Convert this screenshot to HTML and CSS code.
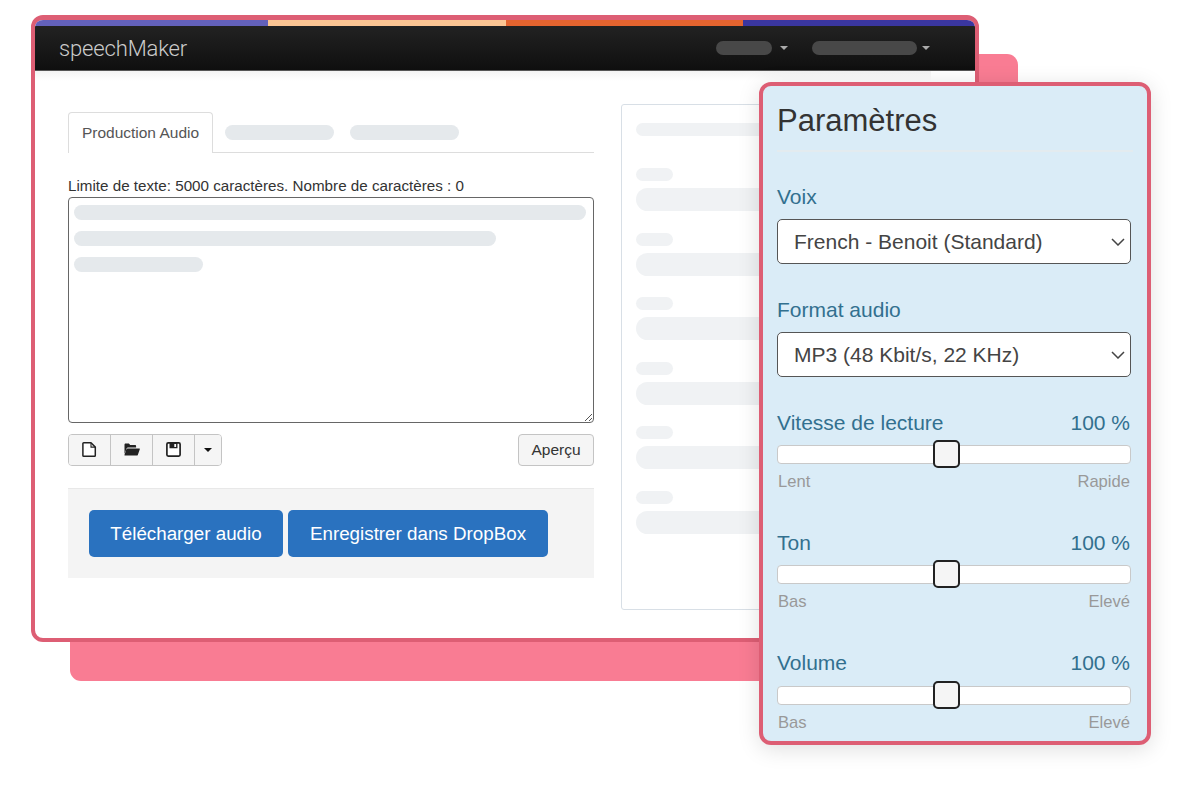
FILE: index.html
```html
<!DOCTYPE html>
<html lang="fr">
<head>
<meta charset="utf-8">
<title>speechMaker</title>
<link rel="stylesheet" href="styles.css">
</head>
<body>
<div class="stage">
  <div class="backdrop"></div>
  <section class="window">
    <div class="stripes">
      <span class="stripe s1"></span><span class="stripe s2"></span><span class="stripe s3"></span><span class="stripe s4"></span>
    </div>
    <nav class="navbar">
      <div class="logo">speechMaker</div>
      <div class="nav-items">
        <span class="nav-pill np1"></span><span class="nav-caret"></span>
        <span class="nav-pill np2"></span><span class="nav-caret nc2"></span>
      </div>
    </nav>
    <div class="nav-shadow"></div>
    <div class="content">
      <div class="left">
        <div class="tabs">
          <div class="tab">Production Audio</div>
          <span class="sk tab-sk"></span>
          <span class="sk tab-sk"></span>
        </div>
        <div class="limit">Limite de texte: 5000 caractères. Nombre de caractères : 0</div>
        <div class="textarea">
          <span class="sk ta1"></span>
          <span class="sk ta2"></span>
          <span class="sk ta3"></span>
          <svg class="grip" width="10" height="10" viewBox="0 0 10 10"><path d="M9 2 2 9M9 6 6 9" stroke="#555" stroke-width="1" fill="none"/></svg>
        </div>
        <div class="toolbar">
          <div class="btn-group">
            <button class="tb"><svg width="15" height="15" viewBox="0 0 15 15"><path d="M1.700 .8h7.300l4.300 4.300v8.300a.8.8 0 0 1-.8.8H1.700a.8.8 0 0 1-.8-.8V1.600a.8.8 0 0 1 .8-.8z" fill="#fff" stroke="#222" stroke-width="1.500" stroke-linejoin="round"/><path d="M9 1v4.100h4.100" fill="none" stroke="#222" stroke-width="1.100"/></svg></button>
            <button class="tb"><svg width="16" height="13" viewBox="0 0 16 13"><path d="M.5 11V1.700C.5 1 1 .5 1.700 .5h3.200l1.300 1.500h4.800c.7 0 1.100.4 1.100 1.100V4.400H3.900c-.6 0-1 .3-1.200.8z" fill="#222"/><path d="M3.500 5.400h11.700c.5 0 .8.4.6.9l-2 5.700c-.2.5-.6.6-1 .6H1c-.5 0-.7-.4-.5-.8l2-5.700c.2-.4.6-.7 1-.7z" fill="#222"/></svg></button>
            <button class="tb"><svg width="15" height="15" viewBox="0 0 15 15"><rect x=".9" y=".9" width="13.200" height="13.200" rx="1.300" fill="#fff" stroke="#222" stroke-width="1.700"/><path d="M3.500 1h8v5.200h-8z" fill="#222"/><rect x="8.300" y="2" width="1.800" height="3" fill="#fff"/></svg></button>
            <button class="tb tb-caret"><span class="caret-down"></span></button>
          </div>
          <button class="preview">Aperçu</button>
        </div>
        <div class="well">
          <button class="primary p1">Télécharger audio</button>
          <button class="primary p2">Enregistrer dans DropBox</button>
        </div>
      </div>
      <aside class="card">
        <span class="sk2 head"></span>
        <div class="card-row"><span class="sk2 small"></span><span class="sk2 big"></span></div>
        <div class="card-row"><span class="sk2 small"></span><span class="sk2 big"></span></div>
        <div class="card-row"><span class="sk2 small"></span><span class="sk2 big"></span></div>
        <div class="card-row"><span class="sk2 small"></span><span class="sk2 big"></span></div>
        <div class="card-row"><span class="sk2 small"></span><span class="sk2 big"></span></div>
        <div class="card-row"><span class="sk2 small"></span><span class="sk2 big"></span></div>
      </aside>
    </div>
  </section>

  <section class="panel">
    <h2 class="title">Paramètres</h2>
    <div class="rule"></div>
    <div class="field first">
      <div class="label">Voix</div>
      <div class="select">French - Benoit (Standard)<svg class="chev" width="14" height="8" viewBox="0 0 14 8"><path d="M1 1l6 6 6-6" fill="none" stroke="#444" stroke-width="1.500"/></svg></div>
    </div>
    <div class="field">
      <div class="label">Format audio</div>
      <div class="select">MP3 (48 Kbit/s, 22 KHz)<svg class="chev" width="14" height="8" viewBox="0 0 14 8"><path d="M1 1l6 6 6-6" fill="none" stroke="#444" stroke-width="1.500"/></svg></div>
    </div>
    <div class="range first-range">
      <div class="range-head"><span>Vitesse de lecture</span><span>100 %</span></div>
      <div class="track"><span class="thumb"></span></div>
      <div class="legend"><span>Lent</span><span>Rapide</span></div>
    </div>
    <div class="range">
      <div class="range-head"><span>Ton</span><span>100 %</span></div>
      <div class="track"><span class="thumb"></span></div>
      <div class="legend"><span>Bas</span><span>Elevé</span></div>
    </div>
    <div class="range last-range">
      <div class="range-head"><span>Volume</span><span>100 %</span></div>
      <div class="track"><span class="thumb"></span></div>
      <div class="legend"><span>Bas</span><span>Elevé</span></div>
    </div>
  </section>
</div>
</body>
</html>
```
FILE: styles.css
```css
* { box-sizing: border-box; }
html, body { margin: 0; padding: 0; background: #fff; }
body { font-family: "Liberation Sans", Arial, sans-serif; color: #333; }
.stage { position: relative; width: 1202px; height: 804px; overflow: hidden; }

.backdrop {
  position: absolute; left: 70px; top: 54px; width: 948px; height: 627px;
  background: #f97c93; border-radius: 11px;
}
.window {
  position: absolute; left: 31px; top: 15px; width: 948px; height: 627px;
  background: #fff; border: 4px solid #dd5e74; border-top-width: 5px; border-radius: 12px; overflow: hidden;
}
.stripes { display: flex; height: 6px; }
.stripe { display: block; height: 6px; }
.s1 { width: 233px; background: #6361bb; }
.s2 { width: 238px; background: #fbc593; }
.s3 { width: 237px; background: #e4642f; }
.s4 { width: 232px; background: #3a36a0; }

.navbar {
  display: flex; align-items: center; justify-content: space-between;
  height: 45px; padding: 0 45px 0 24px;
  background: linear-gradient(#222, #0f0f0f);
  border-bottom: 1px solid #555;
}
.logo { padding-top: 1px; font-family: Roboto, sans-serif; font-weight: 300; font-size: 22px; letter-spacing: -.15px; color: #ccc; }
.nav-items { display: flex; align-items: center; }
.nav-pill { display: block; height: 14px; border-radius: 7px; background: #484848; }
.np1 { width: 56px; }
.np2 { width: 105px; }
.nav-caret { width: 0; height: 0; margin: 0 24px 0 8px; border: 4.500px solid transparent; border-top: 4.500px solid #aaa; border-bottom: 0; }
.nav-caret.nc2 { margin: 0 0 0 5px; }
.nav-shadow { height: 10px; width: 896px; margin-bottom: -10px; background: linear-gradient(#f3f3f3, #fff); }

.content { display: flex; gap: 27px; padding: 33px 0 0 33px; }
.left { width: 526px; padding-top: 8px; }
.sk { display: block; background: #e5e9ec; border-radius: 8px; height: 15px; }

.tabs { display: flex; align-items: center; height: 41px; border-bottom: 1px solid #ddd; }
.tab {
  width: 145px; height: 41px; padding-top: 11px; text-align: center; font-size: 15.500px; color: #555;
  background: #fff; border: 1px solid #ddd; border-bottom: 0; border-radius: 4px 4px 0 0; margin-right: 12px;
}
.tab-sk { width: 109px; margin-right: 16px; }

.limit { height: 17px; margin-top: 24px; font-size: 15.200px; line-height: 17px; color: #333; white-space: nowrap; }
.textarea {
  position: relative; height: 226px; margin-top: 3px; padding: 7px 5px;
  border: 1px solid #666; border-radius: 4px; background: #fff;
  display: flex; flex-direction: column; gap: 11px;
}
.ta1 { width: 512px; }
.ta2 { width: 422px; }
.ta3 { width: 129px; }
.grip { position: absolute; right: 0; bottom: 0; }

.toolbar { display: flex; justify-content: space-between; margin-top: 11px; }
.btn-group { display: flex; height: 32px; border: 1px solid #c4c4c4; border-radius: 4px; overflow: hidden; }
.tb {
  display: flex; align-items: center; justify-content: center;
  width: 42px; height: 30px; padding: 0 0 2px; background: #f5f5f5; border: 0; border-right: 1px solid #c4c4c4;
}
.tb-caret { width: 26px; padding: 0; border-right: 0; }
.caret-down { width: 0; height: 0; border: 4.500px solid transparent; border-top: 4.500px solid #111; border-bottom: 0; }
.preview {
  width: 76px; height: 32px; padding: 0; font: 15.500px "Liberation Sans", Arial, sans-serif; color: #333;
  background: #f5f5f5; border: 1px solid #c4c4c4; border-radius: 4px;
}
.well {
  display: flex; gap: 5px; height: 90px; margin-top: 22px; padding: 21px 0 0 21px;
  background: #f4f4f4; border-top: 1px solid #e8e8e8;
}
.primary {
  height: 47px; padding: 0; font: 18.800px "Liberation Sans", Arial, sans-serif; color: #fff;
  background: #2a72bf; border: 0; border-radius: 5px;
}
.p1 { width: 194px; }
.p2 { width: 260px; }

.card {
  width: 310px; height: 506px; padding: 18px 14px 0; flex: none;
  background: #fff; border: 1px solid #d8dfe6; border-radius: 3px;
}
.sk2 { display: block; background: #f0f2f4; }
.head { width: 200px; height: 13px; border-radius: 7px; margin-bottom: 32px; }
.card-row { height: 64.600px; }
.small { width: 37px; height: 13px; border-radius: 7px; margin-bottom: 7px; }
.big { width: 260px; height: 23px; border-radius: 12px; }

.panel {
  position: absolute; left: 759px; top: 82px; width: 392px; height: 663px;
  padding: 0 16px 0 14px;
  background: #daecf7; border: 4px solid #dd5e74; border-radius: 12px;
  box-shadow: 0 4px 22px rgba(0,0,0,.13);
}
.title { margin: 0; height: 64px; font-weight: 400; font-size: 31px; line-height: 70px; color: #333; }
.rule { height: 2px; margin-right: -2px; background: #e3ebef; }
.field { margin-top: 34px; }
.field.first { margin-top: 33px; }
.label { height: 24px; font-size: 21px; line-height: 24px; color: #32708f; }
.select {
  display: flex; align-items: center; justify-content: space-between;
  height: 45px; margin-top: 10px; padding: 0 5px 0 16px;
  font-size: 21px; color: #444; background: #fff; border: 1px solid #555; border-radius: 5px;
}
.range { margin-top: 38px; }
.first-range { margin-top: 33px; }
.last-range { margin-top: 38px; }
.range-head { display: flex; justify-content: space-between; height: 24px; padding: 1px 1px 0 0; font-size: 21px; line-height: 24px; color: #32708f; }
.track { position: relative; height: 19px; margin-top: 11px; background: #fff; border: 1px solid #c9c9c9; border-radius: 4px; }
.last-range .track { margin-top: 12px; }
.thumb {
  position: absolute; left: 155px; top: -6px; width: 27px; height: 28px;
  background: #f5f5f5; border: 2px solid #222; border-radius: 5px;
}
.legend { display: flex; justify-content: space-between; height: 20px; margin-top: 8px; padding: 0 1px; font-size: 16.600px; line-height: 20px; color: #999; }
```
